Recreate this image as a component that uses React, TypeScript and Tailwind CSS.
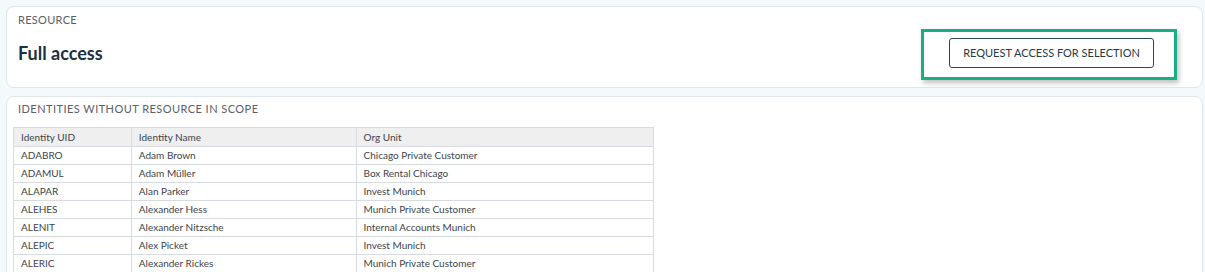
import React from "react";

const rows = [
  { uid: "ADABRO", name: "Adam Brown", org: "Chicago Private Customer" },
  { uid: "ADAMUL", name: "Adam Müller", org: "Box Rental Chicago" },
  { uid: "ALAPAR", name: "Alan Parker", org: "Invest Munich" },
  { uid: "ALEHES", name: "Alexander Hess", org: "Munich Private Customer" },
  { uid: "ALENIT", name: "Alexander Nitzsche", org: "Internal Accounts Munich" },
  { uid: "ALEPIC", name: "Alex Picket", org: "Invest Munich" },
  { uid: "ALERIC", name: "Alexander Rickes", org: "Munich Private Customer" },
];

export default function App() {
  return (
    <div className="h-[272px] overflow-hidden bg-[#f4f9fc] pl-[6px] pr-[2px] pt-[6px] font-['Lato','Noto_Sans',sans-serif] text-[#3a3f45]">
      {/* resource card */}
      <div className="flex h-[82px] items-start justify-between rounded-[8px] border border-[#e1e6ea] bg-white pl-[11px] pr-[25px]">
        <div className="pt-[7px]">
          <div className="text-[11px] uppercase leading-[12px] tracking-[0.3px] text-[#5b6067]">Resource</div>
          <div className="mt-[16px] text-[18px] font-bold leading-[22px] text-[#1b3040]">Full access</div>
        </div>
        <div className="mt-[22px] border-[3px] border-[#1aae88] pb-[9px] pl-[25px] pr-[20px] pt-[6px] shadow-[2px_3px_5px_rgba(0,0,0,0.25)]">
          <button className="h-[30px] w-[205px] rounded-[3px] border border-[#2d4756] bg-white text-[11px] uppercase text-[#253a48]">
            Request access for selection
          </button>
        </div>
      </div>

      {/* identities card */}
      <div className="mt-[8px] h-[200px] rounded-t-[8px] border border-[#e1e6ea] bg-white pl-[6px]">
        <div className="pl-[5px] pt-[6px] text-[11px] uppercase leading-[12px] tracking-[0.45px] text-[#5b6067]">
          Identities without resource in scope
        </div>
        <table className="mt-[12px] w-[641px] border-collapse text-left text-[10px] text-[#3d434a]">
          <colgroup>
            <col className="w-[118px]" />
            <col className="w-[225px]" />
            <col className="w-[298px]" />
          </colgroup>
          <thead>
            <tr className="h-[19px] bg-[#efefef]">
              <th className="border border-[#d9dbe3] pl-[7px] font-normal">Identity UID</th>
              <th className="border border-[#d9dbe3] pl-[7px] font-normal">Identity Name</th>
              <th className="border border-[#d9dbe3] pl-[7px] font-normal">Org Unit</th>
            </tr>
          </thead>
          <tbody>
            {rows.map((r) => (
              <tr key={r.uid} className="h-[18px]">
                <td className="border border-[#d9dbe3] pl-[7px]">{r.uid}</td>
                <td className="border border-[#d9dbe3] pl-[7px]">{r.name}</td>
                <td className="border border-[#d9dbe3] pl-[7px]">{r.org}</td>
              </tr>
            ))}
          </tbody>
        </table>
      </div>
    </div>
  );
}
